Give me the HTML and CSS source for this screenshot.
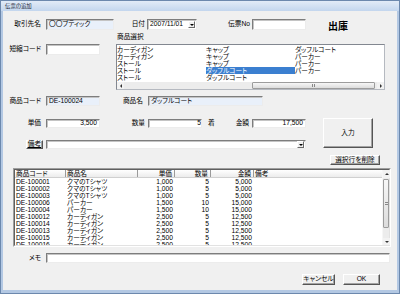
FILE: index.html
```html
<!DOCTYPE html>
<html lang="ja">
<head>
	<meta charset="utf-8">
	<title>伝票の追加</title>
	<link rel="stylesheet" href="styles.css">
</head>
<body>
	<div class="window">
		<div class="titlebar">伝票の追加</div>
		<div class="dialog">
			<div class="row row-head">
				<span class="lbl">取引先名</span>
				<span class="field tint w-client">〇〇ブティック</span>
				<span class="lbl lbl-date">日付</span>
				<span class="field combo w-date">2007/11/01<i class="drop"></i></span>
				<span class="lbl lbl-no">伝票No</span>
				<span class="field w-no"></span>
				<span class="mode">出庫</span>
			</div>
			<div class="row-select">
				<div class="row short">
					<span class="lbl">短縮コード</span>
					<span class="field w-code"></span>
				</div>
				<div class="picker">
					<div class="caption">商品選択</div>
					<div class="listbox">
						<div class="items">
							<span>カーディガン</span>
							<span>カーディガン</span>
							<span>ストール</span>
							<span>ストール</span>
							<span>ストール</span>
							<span>キャップ</span>
							<span>キャップ</span>
							<span>キャップ</span>
							<span class="sel">ダッフルコート</span>
							<span>ダッフルコート</span>
							<span>ダッフルコート</span>
							<span>パーカー</span>
							<span>パーカー</span>
							<span>パーカー</span>
						</div>
						<div class="hscroll">
							<i class="arrow left"></i>
							<span class="spacer"></span>
							<span class="thumb"><b></b></span>
							<i class="arrow right"></i>
						</div>
					</div>
				</div>
			</div>
			<div class="row row-item">
				<span class="lbl">商品コード</span>
				<span class="field tint w-code">DE-100024</span>
				<span class="lbl lbl-name">商品名</span>
				<span class="field tint w-name">ダッフルコート</span>
			</div>
			<div class="mid">
				<div class="mid-left">
					<div class="row row-price">
						<span class="lbl">単価</span>
						<span class="field num w-code">3,500</span>
						<span class="lbl lbl-qty">数量</span>
						<span class="field num qty w-code">5</span>
						<span class="unit">着</span>
						<span class="lbl lbl-amt">金額</span>
						<span class="field num w-no">17,500</span>
					</div>
					<div class="row row-note">
						<span class="btn btn-note">備考</span>
						<span class="field combo w-note"><i class="drop"></i></span>
					</div>
				</div>
				<span class="btn btn-enter">入力</span>
			</div>
			<div class="row row-del">
				<span class="btn btn-del">選択行を削除</span>
			</div>
			<div class="grid-frame">
				<div class="grid">
					<div class="grid-body">
						<div class="grid-row grid-head">
							<span>商品コード</span><span>商品名</span><span class="r">単価</span><span class="r">数量</span><span class="r">金額</span><span>備考</span>
						</div>
						<div class="grid-row"><span>DE-100001</span><span>クマのTシャツ</span><span class="r">1,000</span><span class="r">5</span><span class="r">5,000</span><span></span></div>
						<div class="grid-row"><span>DE-100002</span><span>クマのTシャツ</span><span class="r">1,000</span><span class="r">5</span><span class="r">5,000</span><span></span></div>
						<div class="grid-row"><span>DE-100003</span><span>クマのTシャツ</span><span class="r">1,000</span><span class="r">5</span><span class="r">5,000</span><span></span></div>
						<div class="grid-row"><span>DE-100006</span><span>パーカー</span><span class="r">1,500</span><span class="r">10</span><span class="r">15,000</span><span></span></div>
						<div class="grid-row"><span>DE-100004</span><span>パーカー</span><span class="r">1,500</span><span class="r">10</span><span class="r">15,000</span><span></span></div>
						<div class="grid-row"><span>DE-100012</span><span>カーディガン</span><span class="r">2,500</span><span class="r">5</span><span class="r">12,500</span><span></span></div>
						<div class="grid-row"><span>DE-100014</span><span>カーディガン</span><span class="r">2,500</span><span class="r">5</span><span class="r">12,500</span><span></span></div>
						<div class="grid-row"><span>DE-100013</span><span>カーディガン</span><span class="r">2,500</span><span class="r">5</span><span class="r">12,500</span><span></span></div>
						<div class="grid-row"><span>DE-100015</span><span>カーディガン</span><span class="r">2,500</span><span class="r">5</span><span class="r">12,500</span><span></span></div>
						<div class="grid-row"><span>DE-100016</span><span>カーディガン</span><span class="r">2,500</span><span class="r">5</span><span class="r">12,500</span><span></span></div>
					</div>
					<div class="vscroll">
						<i class="arrow up"></i>
						<span class="thumb"><b></b></span>
						<span class="spacer"></span>
						<i class="arrow down"></i>
					</div>
				</div>
			</div>
			<div class="row row-memo">
				<span class="lbl">メモ</span>
				<span class="field w-memo"></span>
			</div>
			<div class="row row-foot">
				<span class="btn btn-cancel">キャンセル</span>
				<span class="btn btn-ok">OK</span>
			</div>
		</div>
	</div>
</body>
</html>
```

FILE: styles.css
```css
*{
	margin:0;
	padding:0;
	box-sizing:border-box;
}
body{
	width:400px;
	height:294px;
	overflow:hidden;
	font-family:"Liberation Sans","Noto Sans CJK JP",sans-serif;
	font-size:6.7px;
	line-height:1;
	color:#000;
	font-feature-settings:"palt";
}
.window{
	width:400px;
	height:294px;
	display:flex;
	flex-direction:column;
	background:#b3c8e3;
	border:1px solid #6c88ad;
	padding:0 2px 3px;
}
.titlebar{
	height:10px;
	margin:0 -2px;
	padding-left:4px;
	font-size:5.4px;
	line-height:10px;
	color:#1b2838;
	background:linear-gradient(#e2ebf7,#c3d6ee);
}
.dialog{
	flex:1;
	display:flex;
	flex-direction:column;
	background:#f0f0f0;
}
.row{
	display:flex;
	align-items:center;
}
.lbl{
	width:38px;
	margin-right:5px;
	text-align:right;
	white-space:nowrap;
}
.lbl-date{width:31px;margin-right:2px;}
.lbl-no{width:53px;margin-right:2px;}
.lbl-name{width:43px;}
.lbl-qty{width:45px;margin-right:3px;}
.lbl-amt{width:33px;margin-right:3px;}

.field{
	display:flex;
	align-items:center;
	height:100%;
	padding:0 2px;
	background:#fff;
	border:1px solid;
	border-color:#7d7d7d #ececec #ececec #7d7d7d;
	box-shadow:inset 1px 1px 0 #c4c4c4;
	white-space:nowrap;
	overflow:hidden;
}
.tint{background:#e9f0fa;}
.num{justify-content:flex-end;}
.qty{padding-right:0;}
.combo{
	justify-content:space-between;
	padding-right:1px;
}
.drop{
	display:flex;
	align-items:center;
	justify-content:center;
	width:7px;
	height:7px;
	margin-left:auto;
	background:#f0f0f0;
	border:1px solid;
	border-color:#fff #6a6a6a #6a6a6a #fff;
}
.drop::after{
	content:"";
	border-left:2px solid transparent;
	border-right:2px solid transparent;
	border-top:2px solid #000;
}
.w-client{width:68px;}
.w-date{width:50px;}
.w-no{width:54px;}
.w-code{width:54px;}
.w-name{width:115px;}
.w-note{width:260px;}
.w-memo{width:344px;}

.row-head{
	height:11px;
	margin-top:8px;
}
.mode{
	align-self:flex-start;
	margin:3px 0 0 22px;
	font-size:10px;
	line-height:10px;
	font-weight:bold;
}

.row-select{
	display:flex;
	align-items:flex-start;
	margin-top:3px;
}
.short{
	height:11px;
	margin-top:11px;
}
.picker{
	margin-left:16px;
}
.caption{
	height:8px;
	line-height:8px;
	margin-bottom:3px;
	padding-left:1px;
}
.listbox{
	display:flex;
	flex-direction:column;
	width:269px;
	height:46px;
	background:#fff;
	border:1px solid;
	border-color:#828790 #b5b9c0 #b5b9c0 #828790;
}
.items{
	flex:1;
	display:grid;
	grid-auto-flow:column;
	grid-template-rows:repeat(5,7px);
	grid-auto-columns:89px;
	padding-top:1px;
	overflow:hidden;
}
.items span{
	line-height:7px;
	white-space:nowrap;
}
.items .sel{
	background:#3b7fd0;
	color:#fff;
}

.hscroll{
	display:flex;
	height:7px;
	background:#ececec;
}
.hscroll .spacer{flex:1;}
.hscroll .thumb{
	width:123px;
	margin-right:2px;
}
.vscroll{
	display:flex;
	flex-direction:column;
	width:7px;
	background:#ececec;
	border-left:1px solid #f6f6f6;
}
.vscroll .thumb{
	height:49px;
	margin-top:1px;
}
.vscroll .spacer{flex:1;}
.thumb{
	display:flex;
	align-items:center;
	justify-content:center;
	background:linear-gradient(#f7f7f7,#dcdcdc);
	border:1px solid #9c9c9c;
	border-radius:1px;
}
.hscroll .thumb b{
	width:3px;
	height:3px;
	border-left:1px solid #888;
	border-right:1px solid #888;
}
.vscroll .thumb b{
	width:3px;
	height:3px;
	border-top:1px solid #888;
	border-bottom:1px solid #888;
}
.arrow{
	display:flex;
	align-items:center;
	justify-content:center;
	width:7px;
	height:7px;
	background:#f2f2f2;
}
.vscroll .up{height:8px;}
.arrow::after{
	content:"";
	border:2px solid transparent;
}
.arrow.left::after{border-right-color:#333;border-left-width:0;}
.arrow.right::after{border-left-color:#333;border-right-width:0;}
.arrow.up::after{border-bottom-color:#333;border-top-width:0;}
.arrow.down::after{border-top-color:#333;border-bottom-width:0;}

.row-item{
	height:10px;
	margin-top:6px;
}

.mid{
	display:flex;
	align-items:flex-start;
	margin-top:12px;
}
.row-price{
	height:9px;
	margin-top:1px;
}
.unit{
	width:8px;
	margin-left:6px;
}
.row-note{
	height:9px;
	margin-top:12px;
}
.btn{
	display:flex;
	align-items:center;
	justify-content:center;
	background:#f0f0f0;
	border:1px solid;
	border-color:#fff #555 #555 #fff;
	box-shadow:inset -1px -1px 0 #a3a3a3;
	white-space:nowrap;
}
.btn-note{
	width:17px;
	height:9px;
	margin:0 3px 0 23px;
	text-decoration:underline;
}
.btn-enter{
	width:50px;
	height:30px;
	margin-left:17px;
}
.row-del{
	justify-content:flex-end;
	height:10px;
	margin-top:6px;
	padding-right:17px;
}
.btn-del{
	width:50px;
	height:10px;
}

.grid-frame{
	width:378px;
	height:79px;
	margin:3px 0 0 10px;
	border:1px solid;
	border-color:#9d9d9d #fff #fff #9d9d9d;
}
.grid{
	display:flex;
	height:100%;
	background:#fff;
	border:1px solid;
	border-color:#5f5f5f #e2e2e2 #e2e2e2 #5f5f5f;
}
.grid-body{
	flex:1;
	overflow:hidden;
}
.grid-row{
	display:grid;
	grid-template-columns:51px 72px 37px 36px 43px 1fr;
	height:7px;
	line-height:7px;
	white-space:nowrap;
}
.grid-row span{
	padding:0 2px 0 1px;
	overflow:hidden;
}
.grid-row .r{text-align:right;}
.grid-head{
	height:8px;
	line-height:8px;
	background:linear-gradient(#fff,#ececec);
	border-bottom:1px solid #d0d0d0;
}
.grid-head span{
	border-right:1px solid #9a9a9a;
}
.grid-head span:last-child{border-right:none;}

.row-memo{
	height:10px;
	margin-top:6px;
}
.row-foot{
	justify-content:flex-end;
	gap:8px;
	height:11px;
	margin-top:11px;
	padding-right:17px;
}
.btn-cancel{width:33px;height:11px;}
.btn-ok{width:37px;height:11px;}
```
